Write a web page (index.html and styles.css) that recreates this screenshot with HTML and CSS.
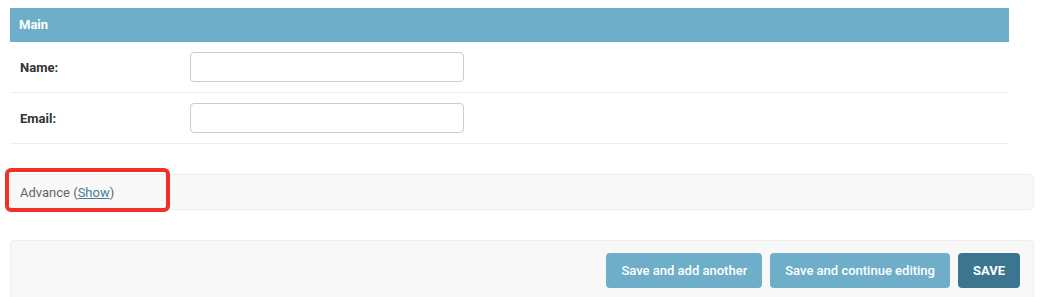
FILE: index.html
```html
<!DOCTYPE html>
<html>
<head>
<meta charset="utf-8">
<link rel="stylesheet" href="styles.css">
</head>
<body>
<div class="page">
  <fieldset class="module">
    <h2 class="module-title">Main</h2>
    <div class="form-row">
      <label class="field-label">Name:</label>
      <input class="text-input" type="text">
    </div>
    <div class="form-row">
      <label class="field-label">Email:</label>
      <input class="text-input" type="text">
    </div>
  </fieldset>
  <div class="collapse-box">Advance (<a class="toggle-link" href="#">Show</a>)</div>
  <div class="submit-row">
    <button class="btn">Save and add another</button>
    <button class="btn">Save and continue editing</button>
    <button class="btn btn-default">SAVE</button>
  </div>
  <div class="annotation"></div>
</div>
</body>
</html>
```
FILE: styles.css
```css
* { box-sizing: border-box; }
html, body { margin: 0; padding: 0; background: #fff; }
body {
  font-family: Roboto, "Liberation Sans", Arial, sans-serif;
  font-size: 13px;
  color: #333;
}
.page {
  position: relative;
  padding: 8px 15px 0 10px;
}
.module {
  margin: 0 25px 0 0;
  padding: 0;
  border: none;
}
.module-title {
  margin: 0;
  background: #6eaec9;
  color: #fff;
  font-size: 13px;
  font-weight: 700;
  line-height: 18px;
  padding: 8px 9px;
  height: 34px;
}
.form-row {
  display: flex;
  align-items: center;
  padding: 10px;
  border-bottom: 1px solid #eee;
  height: 51px;
}
.field-label {
  width: 170px;
  font-weight: 700;
  color: #333;
  font-size: 13px;
}
.text-input {
  width: 274px;
  height: 30px;
  border: 1px solid #ccc;
  border-radius: 4px;
  background: #fff;
  padding: 5px 6px;
  margin: 0;
  font-family: inherit;
}
.collapse-box {
  margin-top: 30px;
  height: 36px;
  background: #f8f8f8;
  border: 1px solid #eee;
  border-radius: 4px;
  padding: 0 9px;
  display: flex;
  align-items: center;
  color: #666;
  font-size: 13px;
}
.toggle-link {
  color: #447e9b;
  text-decoration: underline;
}
.submit-row {
  margin-top: 30px;
  background: #f8f8f8;
  border: 1px solid #eee;
  border-radius: 4px;
  padding: 12px 13px 12px 14px;
  display: flex;
  justify-content: flex-end;
  gap: 8px;
  height: 70px;
}
.btn {
  height: 35px;
  padding: 0 15px;
  border: none;
  border-radius: 4px;
  background: #6eaec9;
  color: #fff;
  font-family: inherit;
  font-size: 13px;
  font-weight: 500;
  line-height: 15px;
  margin: 0;
}
.btn-default {
  background: #3b7590;
  font-weight: 700;
}
.annotation {
  position: absolute;
  left: 5px;
  top: 168px;
  width: 165px;
  height: 44px;
  border: 4px solid #f2302a;
  border-radius: 6px;
}
```
